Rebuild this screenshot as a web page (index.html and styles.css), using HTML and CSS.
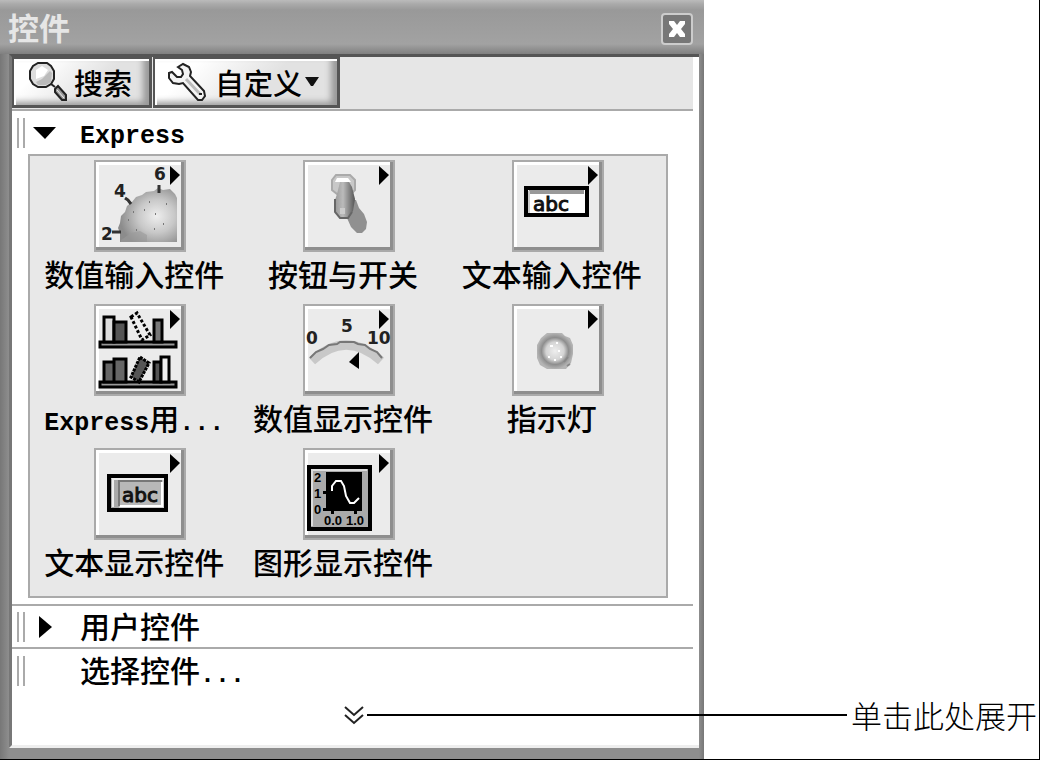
FILE: index.html
```html
<!DOCTYPE html>
<html lang="zh-CN">
<head>
<meta charset="utf-8">
<title>控件</title>
<link rel="stylesheet" href="styles.css">
</head>
<body>
<main class="page">
  <section class="palette" aria-label="控件">
    <header class="titlebar">
      <h1 class="title">控件</h1>
      <button class="close" aria-label="关闭"><svg width="20" height="20" viewBox="0 0 20 20"><path d="M2 2h5l3 4 3-4h5v3l-4 5 4 5v3h-5l-3-4-3 4H2v-3l4-5-4-5z" fill="#fff"/></svg></button>
    </header>
    <div class="client">
      <div class="toolbar">
        <button class="tool tool-search">
          <svg width="40" height="42" viewBox="0 0 40 42"><path d="M10 2h9l4 3 3 5v8l-3 5-5 3h-8l-5-3-3-5v-8l3-5z" fill="#ddd" stroke="#222" stroke-width="2"/><path d="M8 9l6-4 6 4-4 6-8 3z" fill="#fff"/><path d="M8 21l6-3 8-8 2 2-1 9-5 3h-8z" fill="#bbb"/><path d="M23 23l4 3" stroke="#222" stroke-width="2"/><path d="M27 28l3-3 8 9v5h-4l-7-8z" fill="#999" stroke="#222" stroke-width="2"/><path d="M29 29l7 8" stroke="#eee" stroke-width="1"/></svg>
          <span>搜索</span>
        </button>
        <button class="tool tool-custom">
          <svg width="40" height="42" viewBox="0 0 40 42"><path d="M11 6l5-3 6 3 2 5-1 4 14 15 1 5-3 4h-4L16 22l-4 1-6-1-4-5v-5l3-1 5 5h4l2-3-1-4-4-3z" fill="#f4f4f4" stroke="#222" stroke-width="2"/><path d="M19 18l14 15" stroke="#bbb" stroke-width="3"/><path d="M32 33h3" stroke="#222" stroke-width="2"/></svg>
          <span>自定义</span>
          <svg width="16" height="14" viewBox="0 0 16 14"><path d="M1 2h14l-6 9H7z" fill="#111"/></svg>
        </button>
      </div>

      <button class="row row-express" aria-expanded="true">
        <span class="grip"></span>
        <svg class="arrow" width="24" height="22" viewBox="0 0 24 22"><path d="M0 5h23L12 17z"/></svg>
        <span class="latin">Express</span>
      </button>

      <div class="panel">
        <button class="item">
          <span class="tile"><svg viewBox="0 0 92 92">
            <defs><radialGradient id="dial" cx="65%" cy="52%" r="62%"><stop offset="0" stop-color="#eee"/><stop offset=".5" stop-color="#c8c8c8"/><stop offset="1" stop-color="#8c8c8c"/></radialGradient></defs>
            <path d="M26 82v-9l-2-5 2-5 1-7 4-4 2-6 5-4 4-5 6-2 4-3 8-1 4-3 5 2 7-1 5 5 2 4v44z" fill="url(#dial)"/>
            <path d="M27 80l10-7 9-2 7 4v7H27z" fill="#999" opacity=".6"/>
            <path d="M34 60h1M42 70h1M50 50h1M61 54h1M69 64h1M60 69h1M55 42h1M72 44h1M39 52h1" stroke="#777" stroke-width="2"/>
            <path d="M65 25v8M31 38l3 2 3 4M18 72h9" fill="none" stroke="#333" stroke-width="3"/>
            <g class="digit"><text x="60" y="20">6</text><text x="20" y="37">4</text><text x="7" y="80">2</text></g>
            <path d="M76 6l10 9-10 10z"/></svg></span>
          <span class="label">数值输入控件</span>
        </button>
        <button class="item">
          <span class="tile"><svg viewBox="0 0 92 92">
            <defs><linearGradient id="lever"><stop offset="0" stop-color="#999"/><stop offset=".4" stop-color="#bbb"/><stop offset="1" stop-color="#555"/></linearGradient></defs>
            <path d="M48 40h5l3 8 5 6 3 8-1 7-4 4h-5l-6-6-4-9z" fill="#909090"/>
            <path d="M33 15h14l5 5v10l-4 4H34l-5-4V20z" fill="#c8c8c8" stroke="#aaa" stroke-width="2"/>
            <path d="M34 18h11l3 4H32z" fill="#fff"/>
            <path d="M37 22h9l3 5 3 12-2 12-5 8h-6l-6-6-1-13 2-6z" fill="url(#lever)"/>
            <path d="M32 39v13l5 6h8l4-6" fill="none" stroke="#666" stroke-width="2"/>
            <path d="M37 48h5v6h-5z" fill="#ccc"/>
            <path d="M76 6l10 9-10 10z"/></svg></span>
          <span class="label">按钮与开关</span>
        </button>
        <button class="item">
          <span class="tile"><svg viewBox="0 0 92 92">
            <path d="M14 28h61v27H14z" fill="#fff" stroke="#000" stroke-width="4"/><path d="M17 32h55" stroke="#999" stroke-width="4"/><path d="M17 31v22" stroke="#ccc" stroke-width="2"/>
            <text class="abc" x="21" y="51">abc</text>
            <path d="M76 6l10 9-10 10z"/></svg></span>
          <span class="label">文本输入控件</span>
        </button>
        <button class="item">
          <span class="tile"><svg viewBox="0 0 92 92">
            <g stroke="#000" stroke-width="3"><path d="M6 38h76v5H6zM6 78h76v5H6z" fill="#999"/><path d="M10 13h10v25H10z" fill="#ddd"/><path d="M20 18h12v20H20z" fill="#555"/><path d="M60 16h8v22h-8z" fill="#777"/><path d="M10 58h10v20H10zM20 55h12v23H20z" fill="#666"/><path d="M60 58h7v20h-7z" fill="#555"/><path d="M67 53h8v25h-8z" fill="#eee"/></g>
            <path d="M37 13l6-4 13 22-8 5z" fill="#eee" stroke="#000" stroke-width="3" stroke-dasharray="3 2"/>
            <path d="M46 53l9 6-10 19-8-5z" fill="#555" stroke="#000" stroke-width="3" stroke-dasharray="3 1"/>
            <path d="M76 6l10 9-10 10z"/></svg></span>
          <span class="label"><span class="latin">Express</span>用<span class="latin">...</span></span>
        </button>
        <button class="item">
          <span class="tile"><svg viewBox="0 0 92 92">
            <path d="M9 57q34-32 69 0" fill="none" stroke="#c8c8c8" stroke-width="9"/>
            <path d="M7 54l6-6 7-3 6-4 8-1 3-2h14l4 2 7 1 5 4 7 3 5 6" fill="none" stroke="#777" stroke-width="2"/>
            <g class="digit"><text x="3" y="40">0</text><text x="38" y="28">5</text><text x="64" y="40">10</text></g>
            <path d="M56 48v17l-10-7z"/>
            <path d="M76 6l10 9-10 10z"/></svg></span>
          <span class="label">数值显示控件</span>
        </button>
        <button class="item">
          <span class="tile"><svg viewBox="0 0 92 92">
            <defs><radialGradient id="led"><stop offset="0" stop-color="#eee"/><stop offset=".5" stop-color="#d4d4d4"/><stop offset=".75" stop-color="#8e8e8e"/><stop offset="1" stop-color="#b4b4b4"/></radialGradient></defs>
            <path d="M35 29h15l3 3 5 2 3 7v9l-2 9-5 6H35l-7-4-3-7V41l4-7z" fill="url(#led)"/>
            <path d="M38 42h3M44 39h2M46 47h2M36 53h2M42 56h2M48 53h2" stroke="#fff" stroke-width="2"/><path d="M52 58l4-5M55 62l3-2" stroke="#888" stroke-width="2"/>
            <path d="M76 6l10 9-10 10z"/></svg></span>
          <span class="label">指示灯</span>
        </button>
        <button class="item">
          <span class="tile"><svg viewBox="0 0 92 92">
            <path d="M15 28h57v34H15z" fill="#ccc" stroke="#000" stroke-width="4"/><path d="M17 31h8v29h-8z" fill="#aaa"/><path d="M18 31h52M19 31v28" stroke="#eee" stroke-width="2"/><path d="M26 34h42v24H26z" fill="#b8b8b8"/><path d="M25 58V33h43" fill="none" stroke="#777" stroke-width="2"/><path d="M26 58h42V34" fill="none" stroke="#fff" stroke-width="2"/>
            <text class="abc" x="28" y="54">abc</text>
            <path d="M76 6l10 9-10 10z"/></svg></span>
          <span class="label">文本显示控件</span>
        </button>
        <button class="item">
          <span class="tile"><svg viewBox="0 0 92 92">
            <path d="M6 19h61v62H6z" fill="#aaa" stroke="#000" stroke-width="4"/><path d="M9 78V22h55" fill="none" stroke="#ddd" stroke-width="2"/>
            <path d="M23 24h36v39H23zM20 43h4v3h-4zM20 60h4v3h-4zM28 62h3v4h-3zM51 62h3v4h-3z"/>
            <path d="M29 43v-5l4-5h5l3 5 2 10 4 7h4l5-5" fill="none" stroke="#fff" stroke-width="2"/>
            <g class="tick"><text x="11" y="34">2</text><text x="11" y="50">1</text><text x="11" y="66">0</text><text x="21" y="77">0.0</text><text x="43" y="77">1.0</text></g>
            <path d="M76 6l10 9-10 10z"/></svg></span>
          <span class="label">图形显示控件</span>
        </button>
      </div>

      <button class="row row-user" aria-expanded="false">
        <span class="grip"></span>
        <svg class="arrow" width="24" height="24" viewBox="0 0 24 24"><path d="M6 1l13 11L6 23z"/></svg>
        <span class="caption">用户控件</span>
      </button>
      <button class="row row-select">
        <span class="grip"></span>
        <span class="arrow"></span>
        <span class="caption">选择控件<span class="latin">...</span></span>
      </button>
      <button class="expand" aria-label="展开"><svg width="20" height="20" viewBox="0 0 20 20"><path d="M1 2l9 8 9-8M1 10l9 8 9-8" fill="none" stroke="#222" stroke-width="2"/></svg></button>
    </div>
  </section>
  <p class="callout"><span class="leader"></span><span class="note">单击此处展开</span></p>
</main>
</body>
</html>
```
FILE: styles.css
```css
* { box-sizing: border-box; }

body {
  margin: 0;
  background: #fff;
  color: #000;
  font: 500 30px/40px "Noto Sans CJK SC", sans-serif;
}

button {
  margin: 0;
  padding: 0;
  border: 0;
  background: none;
  color: inherit;
  font: inherit;
  text-align: left;
}

svg { display: block; flex: none; }

.page {
  position: relative;
  display: flex;
  min-height: 100vh;
  padding-right: 335px;
  border-right: 1px solid #000;
  border-bottom: 1px solid #000;
}

.palette {
  flex: 1;
  display: flex;
  flex-direction: column;
  padding: 0 5px 11px 9px;
  background: linear-gradient(90deg, #777, #8e8e8e 9px, #8e8e8e calc(100% - 5px), #777);
}

.titlebar {
  display: flex;
  align-items: center;
  justify-content: space-between;
  height: 54px;
  margin: 0 -5px 0 -9px;
  padding: 4px 11px 0 8px;
  background: linear-gradient(#bbb, #aaa 4px, #999 10px, #a2a2a2 44px, #808080);
}

.title {
  margin: 0;
  padding-bottom: 4px;
  color: #e6e6e6;
  font-size: 31px;
  font-weight: 700;
}

.close {
  display: grid;
  place-items: center;
  width: 32px;
  height: 32px;
  border: 2px solid #ccc;
  border-radius: 4px;
  background: #777;
}

.client {
  flex: 1;
  display: flex;
  flex-direction: column;
  padding-right: 6px;
  border-top: 3px solid #555;
  border-left: 3px solid #777;
  border-bottom: 3px solid #eee;
  background: #fff;
}

.toolbar {
  display: flex;
  gap: 1px;
  height: 54px;
  padding-bottom: 1px;
  border-bottom: 2px solid #aaa;
  background: #e6e6e6;
}

.tool {
  display: flex;
  align-items: center;
  border: solid #555;
  border-width: 2px 3px 3px 2px;
  background: linear-gradient(135deg, #fff 20%, #e2e2e2 60%);
  box-shadow: inset 2px 2px #fff, inset -6px -3px 6px #999;
}

.tool-search { width: 140px; padding-left: 14px; gap: 6px; }
.tool-custom { width: 187px; padding-left: 12px; gap: 6px; }
.tool-custom span { padding-left: 2px; }
.tool span { font-size: 29px; }
.tool-custom svg:last-child { margin-left: -4px; }

.row {
  display: flex;
  align-items: center;
  gap: 8px;
  padding-left: 5px;
}

.row-express { height: 43px; }
.row-express .latin { padding-top: 8px; }
.row-user { height: 45px; border: solid #aaa; border-width: 2px 0; margin-top: 6px; }
.row-select { height: 44px; }

.grip {
  width: 8px;
  height: 30px;
  border: solid #aaa;
  border-width: 0 2px;
}

.arrow { width: 24px; margin-right: 15px; }

.caption { padding-bottom: 4px; }

.latin {
  font-family: "Liberation Mono", monospace;
  font-size: 25px;
  font-weight: 700;
  line-height: 1;
}

.panel {
  display: grid;
  grid-template-columns: repeat(3, 1fr);
  row-gap: 6px;
  margin: 0 25px 0 16px;
  padding: 4px 10px 10px 0;
  border: 2px solid #aaa;
  background: #e8e8e8;
}

.item {
  display: flex;
  flex-direction: column;
  align-items: center;
}

.tile {
  width: 92px;
  height: 92px;
  margin-left: 12px;
  border: 2px solid #aaa;
  background: #ebebeb;
  box-shadow: inset -3px -3px #8e8e8e, inset 3px 3px #fff;
}

.tile svg { width: 92px; height: 92px; margin: -2px; }

.label {
  height: 46px;
  line-height: 42px;
  white-space: nowrap;
}

.digit { font: 700 17px "DejaVu Sans", sans-serif; fill: #222; }
.abc { font: 20px "DejaVu Sans", sans-serif; fill: #111; stroke: #111; }
.tick { font: 700 13px "Liberation Sans", sans-serif; }

.expand {
  align-self: center;
  margin: 12px 0 0 2px;
}

.callout {
  position: absolute;
  right: 0;
  bottom: 24px;
  left: calc((100% - 335px) / 2 + 15px);
  display: flex;
  align-items: center;
  gap: 4px;
  margin: 0;
}

.leader { flex: 1; height: 2px; background: #000; }

.note {
  width: 188px;
  font-size: 31px;
  font-weight: 300;
  white-space: nowrap;
}
```
